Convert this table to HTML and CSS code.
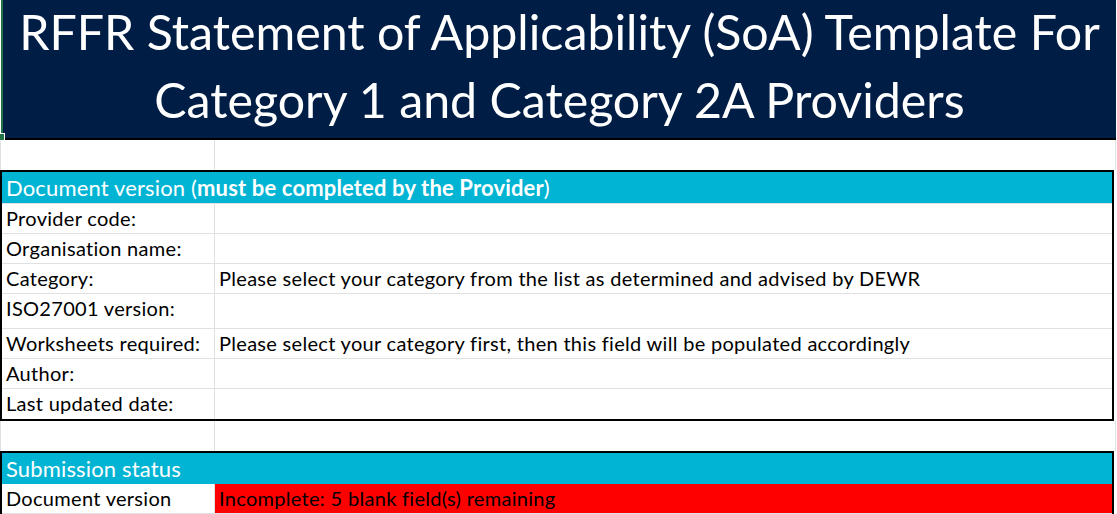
FILE: index.html
```html
<!DOCTYPE html>
<html>
<head>
<meta charset="utf-8">
<link rel="stylesheet" href="styles.css">
</head>
<body>
<div class="sheet">
  <div class="title">
    <div class="title-text">RFFR Statement of Applicability (SoA) Template For<br>Category 1 and Category 2A Providers</div>
    <span class="handle"></span>
  </div>
  <div class="blank">
    <div class="ca"></div>
    <div class="cb"></div>
  </div>
  <div class="box">
    <div class="hdr">Document version (<b>must be completed by the Provider</b>)</div>
    <div class="row"><div class="ca">Provider code:</div><div class="cb"></div></div>
    <div class="row"><div class="ca">Organisation name:</div><div class="cb"></div></div>
    <div class="row"><div class="ca">Category:</div><div class="cb">Please select your category from the list as determined and advised by DEWR</div></div>
    <div class="row tall"><div class="ca">ISO27001 version:</div><div class="cb"></div></div>
    <div class="row"><div class="ca">Worksheets required:</div><div class="cb">Please select your category first, then this field will be populated accordingly</div></div>
    <div class="row"><div class="ca">Author:</div><div class="cb"></div></div>
    <div class="row last"><div class="ca">Last updated date:</div><div class="cb"></div></div>
  </div>
  <div class="blank">
    <div class="ca"></div>
    <div class="cb"></div>
  </div>
  <div class="box box-open">
    <div class="hdr">Submission status</div>
    <div class="row"><div class="ca">Document version</div><div class="cb status-bad">Incomplete: 5 blank field(s) remaining</div></div>
  </div>
</div>
</body>
</html>
```

FILE: styles.css
```css
html, body {
  margin: 0;
  padding: 0;
  background: #ffffff;
  overflow: hidden;
}
.sheet {
  width: 1117px;
  height: 514px;
  overflow: hidden;
  font-family: "Lato", "Liberation Sans", sans-serif;
  font-size: 20px;
  letter-spacing: 0.3px;
  color: #000;
}
.title {
  position: relative;
  box-sizing: border-box;
  width: 1115px;
  height: 140px;
  margin-left: 1px;
  border-left: 2px solid #217346;
  border-bottom: 2px solid #000;
  background: #001e45;
  color: #fff;
  display: flex;
  align-items: flex-start;
  justify-content: center;
}
.title-text {
  font-size: 48.3px;
  letter-spacing: 0;
  line-height: 68px;
  text-align: center;
  margin-top: -3px;
}
.handle {
  position: absolute;
  left: -3px;
  bottom: -3px;
  width: 4px;
  height: 6px;
  background: #217346;
  border: 1px solid #fff;
  border-left: none;
}
.blank {
  display: flex;
  height: 30px;
  width: 1116px;
  box-sizing: border-box;
  border-left: 1px solid #e1e1e1;
  border-right: 1px solid #e1e1e1;
}
.blank .ca {
  width: 213px;
  border-right: 1px solid #e1e1e1;
}
.blank .cb {
  flex: 1;
}
.box {
  box-sizing: border-box;
  width: 1114px;
  border: 2px solid #000;
}
.box-open {
  border-bottom: none;
}
.hdr {
  height: 31px;
  border-bottom: 1px solid #e1e1e1;
  background: #02b4d3;
  color: #fff;
  padding-left: 4px;
  font-size: 22px;
  letter-spacing: 0.15px;
  line-height: 31px;
  white-space: nowrap;
}
.box-open .hdr {
  border-bottom: none;
}
.row {
  display: flex;
  height: 29px;
  border-bottom: 1px solid #e1e1e1;
}
.row.tall {
  height: 34px;
}
.row.last {
  height: 30px;
  border-bottom: none;
}
.row .ca {
  box-sizing: border-box;
  width: 213px;
  border-right: 1px solid #e1e1e1;
  padding-left: 4px;
  line-height: 29px;
  white-space: nowrap;
}
.row .cb {
  flex: 1;
  padding-left: 4px;
  line-height: 29px;
  white-space: nowrap;
}
.status-bad {
  background: #ff0000;
}
```
